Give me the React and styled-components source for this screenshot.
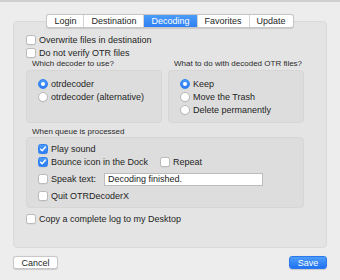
import React from "react";
import styled, { createGlobalStyle } from "styled-components";

const Global = createGlobalStyle`
  html, body { margin: 0; padding: 0; background: #ececec; }
  body { font-family: "Liberation Sans", Arial, sans-serif; color: #242424; }
`;

const Window = styled.div`
  width: 340px;
  height: 280px;
  box-sizing: border-box;
  border-top: 2px solid #cfcfcf;
  background: #ededed;
  display: flex;
  flex-direction: column;
`;

const Panel = styled.div`
  margin: 19px 13px 0;
  height: 227px;
  box-sizing: border-box;
  background: #e4e4e4;
  border: 1px solid #dadada;
  border-radius: 4px;
  padding: 0 22px 0 12px;
  display: flex;
  flex-direction: column;
`;

const TabBar = styled.div`
  align-self: center;
  margin-top: -8px;
  margin-left: 10px;
  height: 14px;
  display: flex;
  background: #fff;
  border: 1px solid #c6c6c6;
  border-radius: 3px;
  box-sizing: border-box;
  box-shadow: 0 0.5px 1px rgba(0, 0, 0, 0.12);
  overflow: hidden;
`;

const Tab = styled.div`
  padding: 0 7px;
  font-size: 9px;
  line-height: 12px;
  color: ${(p) => (p.$active ? "#fff" : "#262626")};
  background: ${(p) => (p.$active ? "linear-gradient(#4b9cf8, #2f7ff4)" : "transparent")};
  border-left: ${(p) => (p.$first ? "none" : "1px solid #d3d3d3")};
`;

const Row = styled.div`
  display: flex;
  align-items: center;
  height: ${(p) => p.$h || 13}px;
  margin-top: ${(p) => p.$mt || 0}px;
  font-size: 9px;
  white-space: nowrap;
`;

const Box = styled.span`
  width: 10px;
  height: 10px;
  box-sizing: border-box;
  flex: none;
  margin-right: 3px;
  border-radius: ${(p) => (p.$round ? "50%" : "2.5px")};
  border: 1px solid ${(p) => (p.$on ? "#2f7ff4" : "#b9b9b9")};
  background: ${(p) => (p.$on ? "linear-gradient(#4d9df8, #2a7af3)" : "#fff")};
  display: flex;
  align-items: center;
  justify-content: center;
  box-shadow: 0 0.5px 0.5px rgba(0, 0, 0, 0.08);
`;

const Dot = styled.span`
  width: 4px;
  height: 4px;
  border-radius: 50%;
  background: #fff;
`;

const LabelGrid = styled.div`
  display: grid;
  grid-template-columns: 136px 136px;
  gap: 6px;
`;

const SmallLabel = styled.div`
  font-size: 8px;
  line-height: 10px;
  height: 10px;
  margin: ${(p) => p.$mt || 0}px 0 0 6px;
  color: #2a2a2a;
  white-space: nowrap;
`;

const GroupGrid = styled.div`
  display: grid;
  grid-template-columns: 136px 136px;
  gap: 6px;
  margin-top: 1px;
`;

const Group = styled.div`
  height: ${(p) => p.$h}px;
  box-sizing: border-box;
  background: #dddddd;
  border: 1px solid #d6d6d6;
  border-radius: 4px;
  padding: ${(p) => p.$pt}px 0 0 11px;
  display: flex;
  flex-direction: column;
`;

const Gap = styled.span`
  width: ${(p) => p.$w}px;
  flex: none;
`;

const TextField = styled.div`
  width: 159px;
  height: 13px;
  box-sizing: border-box;
  background: #fff;
  border: 1px solid #bcbcbc;
  font-size: 9px;
  line-height: 11px;
  padding-left: 3px;
`;

const Footer = styled.div`
  display: flex;
  justify-content: space-between;
  padding: 0 13px;
  margin-top: 8px;
`;

const Button = styled.div`
  width: ${(p) => p.$w}px;
  height: 13px;
  box-sizing: border-box;
  border-radius: 3px;
  font-size: 9px;
  line-height: 12px;
  text-align: center;
  color: ${(p) => (p.$primary ? "#fff" : "#262626")};
  background: ${(p) => (p.$primary ? "linear-gradient(#4d9df8, #1f72f2)" : "#fff")};
  border: 1px solid ${(p) => (p.$primary ? "#2a77ee" : "#c8c8c8")};
  box-shadow: 0 0.5px 1px rgba(0, 0, 0, 0.15);
`;

const Check = ({ on, children }) => (
  <>
    <Box $on={on}>
      {on && (
        <svg width="8" height="8" viewBox="0 0 8 8">
          <path d="M1.6 4.2 L3.2 5.8 L6.4 2" fill="none" stroke="#fff" strokeWidth="1.4" strokeLinecap="round" strokeLinejoin="round" />
        </svg>
      )}
    </Box>
    <span>{children}</span>
  </>
);

const Radio = ({ on, children }) => (
  <Row>
    <Box $round $on={on}>{on && <Dot />}</Box>
    <span>{children}</span>
  </Row>
);

export default function App() {
  const tabs = ["Login", "Destination", "Decoding", "Favorites", "Update"];
  return (
    <>
      <Global />
      <Window>
        <Panel>
          <TabBar>
            {tabs.map((t, i) => (
              <Tab key={t} $first={i === 0} $active={t === "Decoding"}>{t}</Tab>
            ))}
          </TabBar>
          <Row $mt={5}><Check>Overwrite files in destination</Check></Row>
          <Row><Check>Do not verify OTR files</Check></Row>
          <LabelGrid>
            <SmallLabel>Which decoder to use?</SmallLabel>
            <SmallLabel>What to do with decoded OTR files?</SmallLabel>
          </LabelGrid>
          <GroupGrid>
            <Group $h={53} $pt={6}>
              <Radio on>otrdecoder</Radio>
              <Radio>otrdecoder (alternative)</Radio>
            </Group>
            <Group $h={53} $pt={6}>
              <Radio on>Keep</Radio>
              <Radio>Move the Trash</Radio>
              <Radio>Delete permanently</Radio>
            </Group>
          </GroupGrid>
          <SmallLabel $mt={4}>When queue is processed</SmallLabel>
          <Group $h={71} $pt={4}>
            <Row><Check on>Play sound</Check></Row>
            <Row $h={14}>
              <Check on>Bounce icon in the Dock</Check>
              <Gap $w={12} />
              <Check>Repeat</Check>
            </Row>
            <Row $h={20}>
              <Check>Speak text:</Check>
              <Gap $w={8} />
              <TextField>Decoding finished.</TextField>
            </Row>
            <Row $h={14}><Check>Quit OTRDecoderX</Check></Row>
          </Group>
          <Row $mt={4}><Check>Copy a complete log to my Desktop</Check></Row>
        </Panel>
        <Footer>
          <Button $w={45}>Cancel</Button>
          <Button $w={38} $primary>Save</Button>
        </Footer>
      </Window>
    </>
  );
}
